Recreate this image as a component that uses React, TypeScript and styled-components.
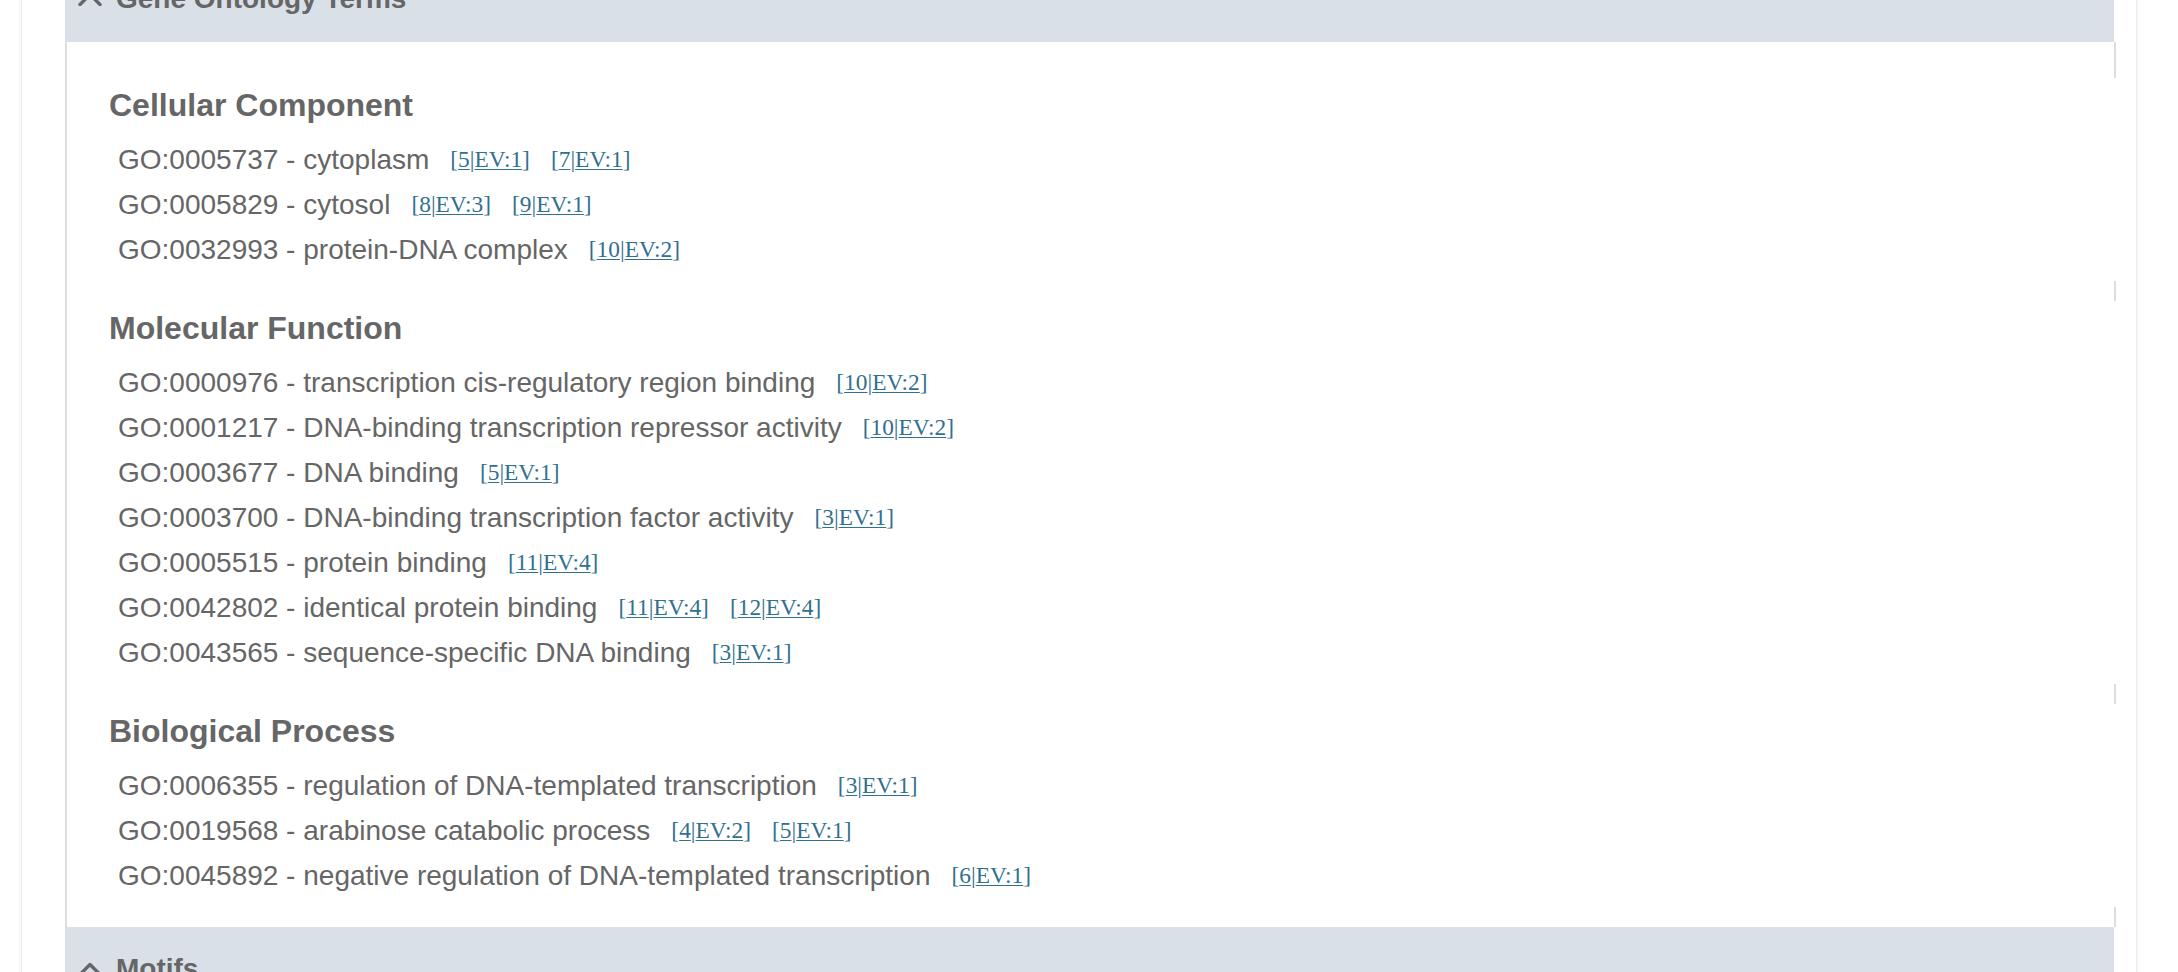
import React from "react";
import styled, { createGlobalStyle } from "styled-components";

const Global = createGlobalStyle`
  html, body { margin: 0; padding: 0; background: #ffffff; overflow: hidden; }
  body { font-family: "Liberation Sans", Arial, sans-serif; }
`;

const Page = styled.div`
  margin: -43px 41px 0 21px;
  padding: 0 20px 0 43px;
  border-left: 1px solid #ececec;
  border-right: 1px solid #ececec;
  box-shadow: 0 0 4px rgba(0, 0, 0, 0.06);
  min-height: 1100px;
`;

const Panel = styled.section``;

const PanelHeader = styled.div`
  display: flex;
  align-items: center;
  gap: 14px;
  background: #d9e0e8;
  padding: 26px 0 27px 13px;
  margin-right: 2px;
  color: #666666;
  font-size: 28px;
  font-weight: 700;
  line-height: 32px;
`;

const PanelBody = styled.div`
  display: flow-root;
  border-left: 2px solid #dddddd;
  border-right: 2px solid #dddddd;
  padding: 36px 0 0 0;
`;

const Section = styled.div`
  background: #ffffff;
  margin: 0 -2px 20px 0;
  padding: 9px 0 9px 42px;
`;

const Heading = styled.h3`
  margin: 0 0 13px 0;
  font-size: 32px;
  line-height: 37px;
  font-weight: 700;
  color: #666666;
`;

const TermList = styled.ul`
  list-style: none;
  margin: 0;
  padding: 0;
`;

const Term = styled.li`
  padding-left: 9px;
  font-size: 28px;
  line-height: 45px;
  color: #666666;
  white-space: nowrap;
`;

const Evidence = styled.span`
  margin-left: 21px;
  font-family: "Liberation Serif", "Times New Roman", serif;
  font-size: 23.4px;
  color: #31708f;
  vertical-align: 2px;
`;

const EvLink = styled.a`
  color: #31708f;
  text-decoration: underline;
  text-underline-offset: 2px;
  text-decoration-thickness: 1px;
`;

const Chevron = () => (
  <svg width="24" height="14" viewBox="0 0 24 14" aria-hidden="true">
    <polyline
      points="2,12.5 12,2.5 22,12.5"
      fill="none"
      stroke="#666666"
      strokeWidth="3.4"
      strokeLinecap="round"
      strokeLinejoin="round"
    />
  </svg>
);

type Ev = [string, string];
type TermData = { id: string; name: string; ev: Ev[] };

const sections: { title: string; terms: TermData[] }[] = [
  {
    title: "Cellular Component",
    terms: [
      { id: "GO:0005737", name: "cytoplasm", ev: [["5", "EV:1"], ["7", "EV:1"]] },
      { id: "GO:0005829", name: "cytosol", ev: [["8", "EV:3"], ["9", "EV:1"]] },
      { id: "GO:0032993", name: "protein-DNA complex", ev: [["10", "EV:2"]] },
    ],
  },
  {
    title: "Molecular Function",
    terms: [
      { id: "GO:0000976", name: "transcription cis-regulatory region binding", ev: [["10", "EV:2"]] },
      { id: "GO:0001217", name: "DNA-binding transcription repressor activity", ev: [["10", "EV:2"]] },
      { id: "GO:0003677", name: "DNA binding", ev: [["5", "EV:1"]] },
      { id: "GO:0003700", name: "DNA-binding transcription factor activity", ev: [["3", "EV:1"]] },
      { id: "GO:0005515", name: "protein binding", ev: [["11", "EV:4"]] },
      { id: "GO:0042802", name: "identical protein binding", ev: [["11", "EV:4"], ["12", "EV:4"]] },
      { id: "GO:0043565", name: "sequence-specific DNA binding", ev: [["3", "EV:1"]] },
    ],
  },
  {
    title: "Biological Process",
    terms: [
      { id: "GO:0006355", name: "regulation of DNA-templated transcription", ev: [["3", "EV:1"]] },
      { id: "GO:0019568", name: "arabinose catabolic process", ev: [["4", "EV:2"], ["5", "EV:1"]] },
      { id: "GO:0045892", name: "negative regulation of DNA-templated transcription", ev: [["6", "EV:1"]] },
    ],
  },
];

export default function App() {
  return (
    <>
      <Global />
      <Page>
        <Panel>
          <PanelHeader>
            <Chevron />
            <span>Gene Ontology Terms</span>
          </PanelHeader>
          <PanelBody>
            {sections.map((s) => (
              <Section key={s.title}>
                <Heading>{s.title}</Heading>
                <TermList>
                  {s.terms.map((t) => (
                    <Term key={t.id}>
                      {t.id} - {t.name}
                      {t.ev.map(([ref, ev], i) => (
                        <Evidence key={i}>
                          [<EvLink href="#">{ref}</EvLink>|<EvLink href="#">{ev}</EvLink>]
                        </Evidence>
                      ))}
                    </Term>
                  ))}
                </TermList>
              </Section>
            ))}
          </PanelBody>
        </Panel>
        <Panel>
          <PanelHeader>
            <Chevron />
            <span>Motifs</span>
          </PanelHeader>
        </Panel>
      </Page>
    </>
  );
}
